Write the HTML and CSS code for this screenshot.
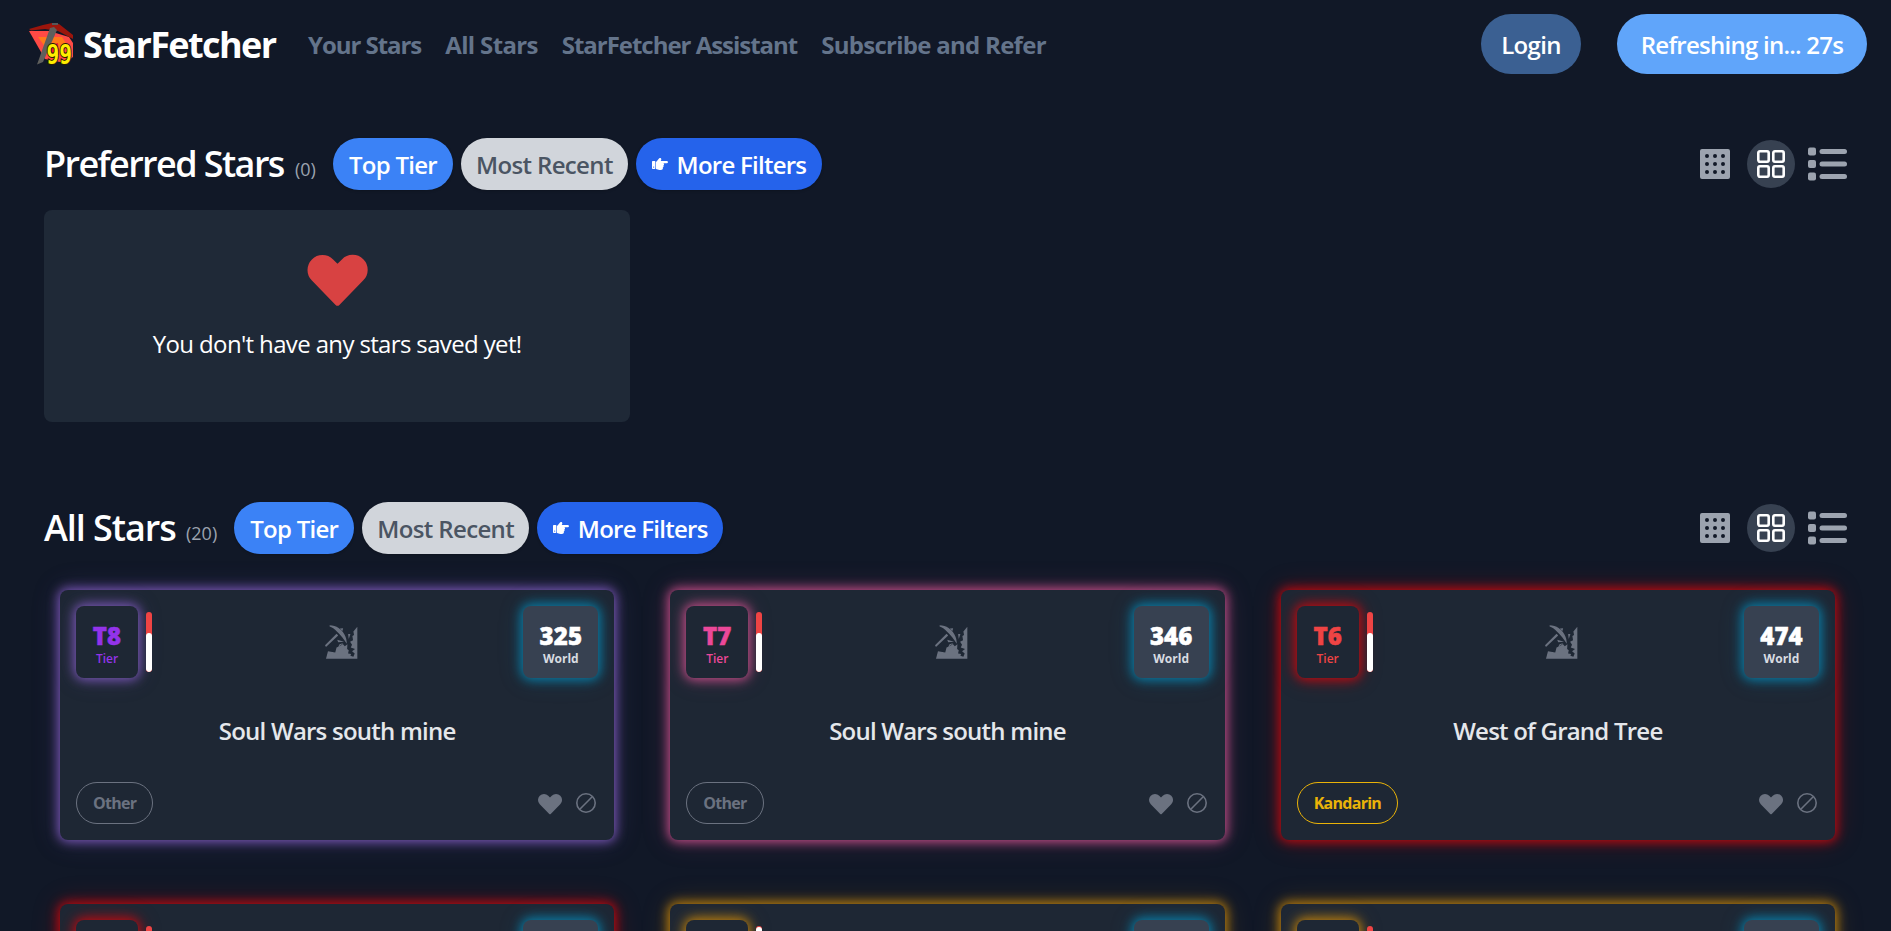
FILE: index.html
```
<!DOCTYPE html>
<html lang="en">
<head>
<meta charset="utf-8">
<title>StarFetcher</title>
<link rel="stylesheet" href="styles.css">
</head>
<body>
<svg class="defs" aria-hidden="true">
  <symbol id="heart" viewBox="0 0 20 20"><path fill-rule="evenodd" d="M3.172 5.172a4 4 0 015.656 0L10 6.343l1.172-1.171a4 4 0 115.656 5.656L10.500 17.300a.7.700 0 01-1 0l-6.328-6.472a4 4 0 010-5.656z"/></symbol>
  <symbol id="ban" viewBox="0 0 20 20"><circle cx="10" cy="10" r="9.2" fill="none" stroke="currentColor" stroke-width="1.6"/><path d="M3.8 16.2L16.2 3.8" stroke="currentColor" stroke-width="1.6"/></symbol>
  <symbol id="dots" viewBox="0 0 30 30"><path fill-rule="evenodd" d="M2 0H28a2 2 0 012 2V28a2 2 0 01-2 2H2a2 2 0 01-2-2V2a2 2 0 012-2zM5 7a2 2 0 104 0a2 2 0 10-4 0zM13 7a2 2 0 104 0a2 2 0 10-4 0zM21 7a2 2 0 104 0a2 2 0 10-4 0zM5 15a2 2 0 104 0a2 2 0 10-4 0zM13 15a2 2 0 104 0a2 2 0 10-4 0zM21 15a2 2 0 104 0a2 2 0 10-4 0zM5 23a2 2 0 104 0a2 2 0 10-4 0zM13 23a2 2 0 104 0a2 2 0 10-4 0zM21 23a2 2 0 104 0a2 2 0 10-4 0z"/></symbol>
  <symbol id="grid" viewBox="0 0 28 28"><g fill="none" stroke="currentColor" stroke-width="2.6"><rect x="1.3" y="1.3" width="10.4" height="10.4" rx="1.6"/><rect x="16.3" y="1.3" width="10.4" height="10.4" rx="1.6"/><rect x="1.3" y="16.3" width="10.4" height="10.4" rx="1.6"/><rect x="16.3" y="16.3" width="10.4" height="10.4" rx="1.6"/></g></symbol>
  <symbol id="list" viewBox="0 0 39 34"><rect x="0" y=".5" width="8" height="8" rx="2"/><rect x="0" y="13" width="8" height="8" rx="2"/><rect x="0" y="25.5" width="8" height="8" rx="2"/><rect x="11.5" y="2" width="27.5" height="5" rx="2.5"/><rect x="11.5" y="14.5" width="27.5" height="5" rx="2.5"/><rect x="11.5" y="27" width="27.5" height="5" rx="2.5"/></symbol>
  <symbol id="hand" viewBox="0 0 16 12"><path fill-rule="evenodd" d="M.8 3H2.600a.8.8 0 01.8.8V10.200a.8.8 0 01-.8.8H.8a.8.8 0 01-.8-.8V3.800A.8.8 0 01.8 3zM1.100 9.100a.6.600 0 101.200 0a.6.600 0 10-1.200 0zM4 4C5.500 3 6.300 1.200 7.300.3C8.300-.4 9.700.400 9.200 1.900L8.700 3H14.800a1.150 1.150 0 010 2.300H11.400C12.300 6 12.200 7.100 11.400 7.500C11.900 8.400 11.500 9.300 10.800 9.600C11.200 11 10.300 12 9 12H7.500C6 12 5.300 11 4 11z"/></symbol>
  <symbol id="mine" viewBox="0 0 100 102"><path d="M14 0C34 0 52 13 59 28C64 37 66 47 66 56C58 43 47 29 36 19C29 12 21 6 14 4zM0 61L35 26L40 31L3 66zM37 44L58 50L40 52zM40 66L44 58L56 54zM70 27L77 27L72 42zM45 10L55 9L53 18zM98 5V102H3L9 79L31 83L35 68L47 62L54 57L60 64L68 58L67 72L72 76L70 86L79 87L77 93L86 96L90 86L82 79L91 72L78 68L82 59L76 50L85 46L83 33L88 30L86 19z"/></symbol>
</svg>

<header class="topbar">
  <a class="brand">
    <svg class="logo" viewBox="0 0 44 43">
      <path fill="#ff4a45" d="M0 8L20 8L40 14L44 20V34L36 40L16 36z"/>
      <path fill="#ff7a1a" d="M9 14L33 14L38 22L22 32z"/>
      <path fill="#f01830" d="M21 22L29 20L30 32L22 31z"/>
      <path fill="#9c150c" d="M0 6L14 2L23 0L30 1L44 12V16L29 8L16 6L2 7.500z"/>
      <path fill="#5f5f5c" d="M21 5L25 4L28 7L14 39L8 41.500L10 36z"/>
      <path fill="#55575a" d="M23 0H29V2H23z"/>
      <text class="level" x="17.500" y="41" textLength="25.500" lengthAdjust="spacingAndGlyphs">99</text>
    </svg>
    <span class="brand-name">StarFetcher</span>
  </a>
  <nav class="links"><a class="l1">Your Stars</a><a class="l2">All Stars</a><a class="l3">StarFetcher Assistant</a><a class="l4">Subscribe and Refer</a></nav>
  <div class="actions"><button class="login">Login</button><button class="refresh">Refreshing in... 27s</button></div>
</header>

<main>
  <section class="preferred">
    <div class="bar">
      <h2 class="h-preferred">Preferred Stars</h2><span class="count">(0)</span>
      <div class="pills"><button class="pill top">Top Tier</button><button class="pill recent">Most Recent</button><button class="pill more"><svg><use href="#hand"/></svg><span>More Filters</span></button></div>
      <div class="views"><svg class="v-dots"><use href="#dots"/></svg><span class="v-active"><svg><use href="#grid"/></svg></span><svg class="v-list"><use href="#list"/></svg></div>
    </div>
    <div class="columns">
      <div class="empty"><svg><use href="#heart"/></svg><p>You don't have any stars saved yet!</p></div>
    </div>
  </section>

  <section class="all">
    <div class="bar">
      <h2 class="h-all">All Stars</h2><span class="count">(20)</span>
      <div class="pills"><button class="pill top">Top Tier</button><button class="pill recent">Most Recent</button><button class="pill more"><svg><use href="#hand"/></svg><span>More Filters</span></button></div>
      <div class="views"><svg class="v-dots"><use href="#dots"/></svg><span class="v-active"><svg><use href="#grid"/></svg></span><svg class="v-list"><use href="#list"/></svg></div>
    </div>
    <div class="columns cards" id="cards"></div>
  </section>
</main>
<script src="stars.js"></script>
</body>
</html>
```
FILE: styles.css
```
* { box-sizing: border-box; }
body { margin: 0; height: 931px; overflow: hidden; background: #111827; color: #fff; font-family: "Open Sans", "Noto Sans", sans-serif; font-size: 24px; line-height: 36px; }
h2, p { margin: 0; }
button { border: 0; font: inherit; font-weight: 600; color: #fff; white-space: nowrap; }
svg { display: block; fill: currentColor; flex: none; }
.defs { position: absolute; width: 0; height: 0; }

.topbar { display: flex; align-items: center; height: 88px; padding: 0 24px 0 29px; }
.brand { display: flex; align-items: center; width: 279px; }
.logo { width: 44px; height: 43px; margin-right: 10px; overflow: visible; }
.level { font: bold 27px "DejaVu Sans Mono", monospace; fill: #ffee00; stroke: #2a1c00; stroke-width: 2px; paint-order: stroke; }
.brand-name { font-size: 36px; font-weight: 700; line-height: 48px; letter-spacing: -1.600px; margin-top: 2px; }
.links { display: flex; gap: 24px; font-weight: 700; color: #64748b; white-space: nowrap; margin-top: 2px; }
.l1 { letter-spacing: -1.050px; }
.l2 { letter-spacing: -.65px; }
.l3 { letter-spacing: -1.030px; }
.l4 { letter-spacing: -.72px; }
.actions { display: flex; gap: 36px; margin-left: auto; }
.login, .refresh { height: 60px; border-radius: 30px; padding: 2px 0 0; }
.login { width: 100px; background: #3b6092; letter-spacing: -.7px; }
.refresh { width: 250px; background: #60a5fa; letter-spacing: -.75px; }

main { padding: 50px 40px 0 44px; }
.bar { display: flex; align-items: center; height: 52px; }
h2 { font-size: 36px; line-height: 52px; font-weight: 580; white-space: nowrap; }
.h-preferred { width: 251px; letter-spacing: -1.600px; }
.h-all { width: 142px; letter-spacing: -1.050px; }
.count { font-size: 18px; line-height: 28px; color: #9ca3af; font-weight: 450; padding-top: 10px; margin-right: 17px; }
.pills { display: flex; gap: 8px; }
.pill { display: flex; align-items: center; justify-content: center; height: 52px; border-radius: 26px; padding: 2px 0 0; letter-spacing: -.75px; box-shadow: 0 1px 3px rgba(0, 0, 0, .2); }
.top { width: 120px; background: #3b82f6; }
.recent { width: 167px; background: #d1d5db; color: #4b5563; font-weight: 560; letter-spacing: -.65px; }
.more { width: 186px; background: #2563eb; gap: 9px; }
.more svg { width: 16px; height: 12px; margin-top: -3px; }
.views { display: flex; align-items: center; margin-left: auto; margin-right: 4px; color: #9ca3af; }
.v-dots { width: 30px; height: 30px; }
.v-active { display: grid; place-items: center; width: 48px; height: 48px; border-radius: 50%; background: #374151; color: #fff; margin: 0 13px 0 17px; }
.v-active svg { width: 28px; height: 28px; }
.v-list { width: 39px; height: 34px; }

.columns { display: grid; grid-template-columns: repeat(3, 1fr); gap: 0 24px; }
.empty { margin-top: 20px; height: 212px; border-radius: 8px; background: #1f2937; display: flex; flex-direction: column; align-items: center; padding-top: 30px; }
.empty svg { width: 75px; height: 75px; color: #d84242; }
.empty p { letter-spacing: -.64px; margin-top: 11px; }
.all { margin-top: 80px; }
.cards { padding-top: 20px; }

.card { --glow: #fff; height: 250px; margin: 16px 16px 48px; padding: 16px; border-radius: 8px; background: #1e2734; box-shadow: 0 0 11px 2px var(--glow), 0 0 28px var(--haze); display: flex; flex-direction: column; }
.purple { --glow: #7856b4; --haze: rgba(117, 83, 176, .25); --ink: #9333ea; }
.pink { --glow: #c04c86; --haze: rgba(184, 72, 127, .25); --ink: #ec4899; }
.red { --glow: #bd0a10; --haze: rgba(184, 10, 16, .3); --ink: #ef4444; }
.amber { --glow: #bd7f0c; --haze: rgba(184, 122, 12, .25); --ink: #eab308; }
.head { display: flex; align-items: center; justify-content: space-between; height: 72px; }
.left { display: flex; align-items: center; gap: 8px; }
.badge { height: 72px; border-radius: 8px; text-align: center; padding-top: 13px; }
.badge b { display: block; font-size: 24px; line-height: 33px; font-weight: 800; -webkit-text-stroke: .5px currentColor; letter-spacing: .1px; }
.badge small { display: block; font-size: 12px; line-height: 14px; font-weight: 600; }
.tier { width: 62px; color: var(--ink); background: #1e2734; box-shadow: 0 0 11px 2px var(--glow), 0 0 24px var(--haze); }
.world { width: 75px; background: #374151; box-shadow: 0 0 11px 2px #0a7ca4, 0 0 24px rgba(10, 124, 164, .3); }
.world small { color: #d9dce1; font-weight: 700; }
.life { width: 6px; height: 60px; border-radius: 3px; background: #ef4444; display: flex; align-items: flex-end; overflow: hidden; }
.life i { width: 6px; border-radius: 3px; background: #fff; }
.mine { width: 33px; height: 34px; color: #6b7280; margin-left: 7px; }
.place { text-align: center; font-weight: 600; color: #e5e7eb; letter-spacing: -.77px; margin-top: 35px; }
.foot { display: flex; align-items: center; height: 42px; margin-top: auto; color: #6b7280; }
.region { height: 42px; padding: 1px 16px 0; border: 1px solid; border-radius: 21px; font-size: 16px; line-height: 38px; font-weight: 700; letter-spacing: -.72px; margin-right: auto; }
.kandarin { color: #eab308; }
.foot .fav { width: 30px; height: 30px; margin: -1px 11px 0 0; }
.foot .ban { width: 20px; height: 20px; margin-right: 2px; }
```
FILE: stars.js
```
const stars = [
  ['purple', 'T8', 325, 'Soul Wars south mine', 'Other', 65],
  ['pink', 'T7', 346, 'Soul Wars south mine', 'Other', 65],
  ['red', 'T6', 474, 'West of Grand Tree', 'Kandarin', 65],
  ['red', 'T6', 420, 'West of Grand Tree', 'Kandarin', 60],
  ['amber', 'T5', 351, 'Soul Wars south mine', 'Other', 98],
  ['amber', 'T5', 368, 'Soul Wars south mine', 'Other', 65]
];
document.getElementById('cards').innerHTML = stars.map(([tone, tier, world, place, region, life]) => `
  <article class="card ${tone}">
    <div class="head">
      <div class="left">
        <div class="badge tier"><b>${tier}</b><small>Tier</small></div>
        <div class="life"><i style="height:${life}%"></i></div>
      </div>
      <svg class="mine"><use href="#mine"/></svg>
      <div class="badge world"><b>${world}</b><small>World</small></div>
    </div>
    <div class="place">${place}</div>
    <div class="foot">
      <span class="region ${region.toLowerCase()}">${region}</span>
      <svg class="fav"><use href="#heart"/></svg><svg class="ban"><use href="#ban"/></svg>
    </div>
  </article>`).join('');
```
